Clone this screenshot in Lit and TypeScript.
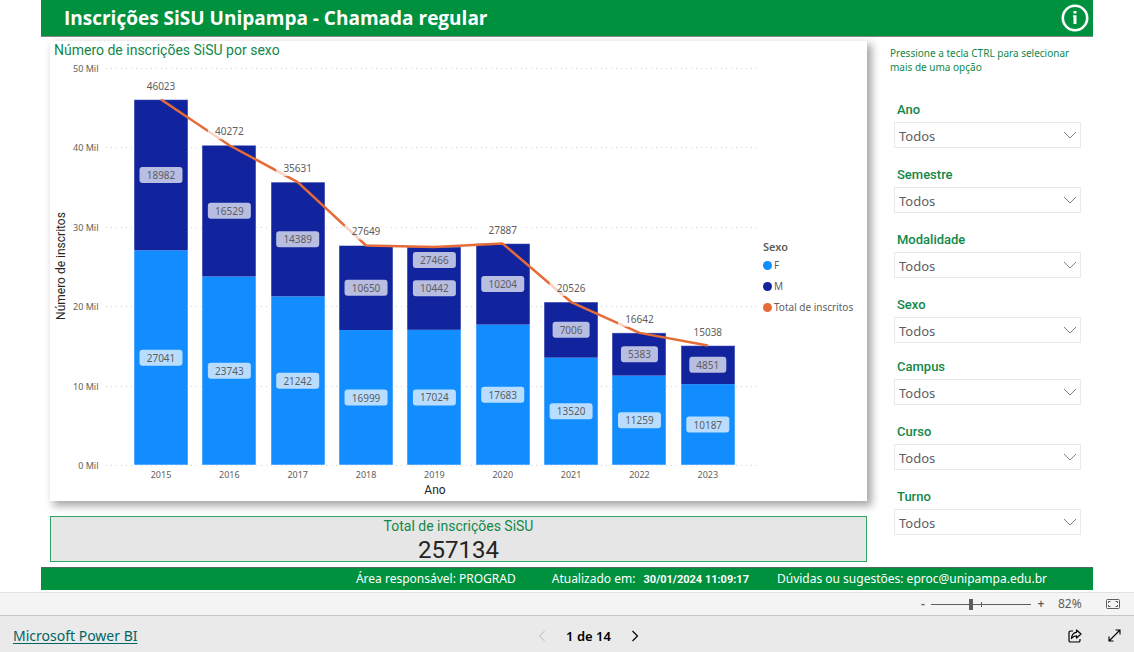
import { LitElement, html, svg, css } from "lit";
import { customElement, property } from "lit/decorators.js";

interface YearRow {
  year: number;
  f: number;
  m: number;
  total: number;
}

const ROWS: YearRow[] = [
  { year: 2015, f: 27041, m: 18982, total: 46023 },
  { year: 2016, f: 23743, m: 16529, total: 40272 },
  { year: 2017, f: 21242, m: 14389, total: 35631 },
  { year: 2018, f: 16999, m: 10650, total: 27649 },
  { year: 2019, f: 17024, m: 10442, total: 27466 },
  { year: 2020, f: 17683, m: 10204, total: 27887 },
  { year: 2021, f: 13520, m: 7006, total: 20526 },
  { year: 2022, f: 11259, m: 5383, total: 16642 },
  { year: 2023, f: 10187, m: 4851, total: 15038 },
];

const BASE = 406;
const TOP = 9;
const MAX = 50000;
const FIRST = 111;
const STEP = 68.35;
const BAR = 54;

const yOf = (v: number) => BASE - (v / MAX) * (BASE - TOP);
const xOf = (i: number) => FIRST + i * STEP;

@customElement("stacked-chart")
export class StackedChart extends LitElement {
  @property({ attribute: false }) rows: YearRow[] = [];

  static styles = css`
    :host { display: flex; min-width: 0; }
    .plot { flex: 1; min-width: 0; display: block; height: auto; }
    text { font-family: "Noto Sans", "Open Sans", sans-serif; fill: #605e5c; }
    .tick { font-size: 9px; }
    .value { font-size: 10px; text-anchor: middle; }
    .middle { text-anchor: middle; }
    .end { text-anchor: end; }
    .axis-title { font-family: Roboto, sans-serif; font-size: 12px; fill: #252423; text-anchor: middle; }
    .grid { stroke: #d0d0d0; stroke-width: 1; stroke-dasharray: 1 4; }
    .f { fill: #118dff; }
    .m { fill: #12239e; }
    .edge { fill: none; stroke: #ffffff; stroke-opacity: 0.5; }
    .line { fill: none; stroke: #e66c37; stroke-width: 2.5; stroke-linejoin: round; }
    .plate { fill: #ffffff; fill-opacity: 0.7; }
    .legend {
      width: 104px;
      padding-top: 180px;
      font: 11px/16px "Noto Sans", "Open Sans", sans-serif;
      color: #605e5c;
    }
    .legend-title { margin: 0; font-size: 11px; line-height: 16px; font-weight: 600; }
    ul { margin: 2px 0 0; padding: 0; list-style: none; display: grid; gap: 5px; }
    li { display: flex; align-items: center; gap: 2px; font-size: 10px; white-space: nowrap; }
    .dot { width: 9px; height: 9px; border-radius: 50%; }
    .dot-f { background: #118dff; }
    .dot-m { background: #12239e; }
    .dot-total { background: #e66c37; }
  `;

  private plate(x: number, y: number, value: number) {
    const w = String(value).length > 4 ? 43 : 37;
    return svg`
      <rect class="plate" x=${x - w / 2} y=${y - 8} width=${w} height="16" rx="3"></rect>
      <text class="value" x=${x} y=${y + 4}>${value}</text>`;
  }

  render() {
    const points = this.rows.map((r, i) => `${xOf(i)},${yOf(r.total)}`).join(" ");
    return html`
      <svg class="plot" viewBox="0 0 713 442" role="img" aria-label="Número de inscrições SiSU por sexo">
        ${[0, 10, 20, 30, 40, 50].map(
          (k) => svg`
            <line class="grid" x1="56" x2="711" y1=${Math.round(yOf(k * 1000)) + 0.5} y2=${Math.round(yOf(k * 1000)) + 0.5}></line>
            <text class="tick end" x="48.5" y=${yOf(k * 1000) + 4}>${k} Mil</text>`
        )}
        ${this.rows.map((r, i) => {
          const x = Math.round(xOf(i) - BAR / 2);
          return svg`
            <rect class="f" x=${x} y=${yOf(r.f)} width=${BAR} height=${BASE - yOf(r.f)}></rect>
            <rect class="m" x=${x} y=${yOf(r.total)} width=${BAR} height=${yOf(r.f) - yOf(r.total)}></rect>
            <rect class="edge" x=${x} y=${yOf(r.total)} width=${BAR} height=${BASE - yOf(r.total)}></rect>
            <text class="tick middle" x=${xOf(i)} y="419">${r.year}</text>`;
        })}
        <polyline class="line" points=${points}></polyline>
        ${this.rows.map((r, i) => {
          const x = xOf(i);
          const top = yOf(r.total);
          return svg`
            ${this.plate(x, (top + yOf(r.f)) / 2, r.m)}
            ${this.plate(x, (yOf(r.f) + BASE) / 2, r.f)}
            ${this.plate(x, r.year === 2019 ? top + 13 : top - 14, r.total)}`;
        })}
        <text class="axis-title" x="385" y="435">Ano</text>
        <text class="axis-title" transform="translate(15 207) rotate(-90)">Número de inscritos</text>
      </svg>
      <div class="legend">
        <h3 class="legend-title">Sexo</h3>
        <ul>
          <li><span class="dot dot-f"></span>F</li>
          <li><span class="dot dot-m"></span>M</li>
          <li><span class="dot dot-total"></span>Total de inscritos</li>
        </ul>
      </div>
    `;
  }
}

@customElement("filter-select")
export class FilterSelect extends LitElement {
  @property() label = "";

  static styles = css`
    :host { display: block; }
    label { display: block; padding-left: 3px; font: 500 13px/16px Roboto, sans-serif; color: #118848; }
    .field { display: grid; margin-top: 4px; }
    select, svg { grid-area: 1 / 1; }
    select {
      appearance: none;
      width: 100%;
      height: 26px;
      margin: 0;
      padding: 1px 28px 0 4px;
      border: 1px solid #eaeaea;
      border-radius: 0;
      background: #ffffff;
      color: #605e5c;
      font: 13px "Noto Sans", "Open Sans", sans-serif;
    }
    svg {
      justify-self: end;
      align-self: center;
      margin-right: 4px;
      width: 14px;
      height: 8px;
      fill: none;
      stroke: #808080;
      pointer-events: none;
    }
  `;

  render() {
    return html`
      <label for="choice">${this.label}</label>
      <div class="field">
        <select id="choice"><option>Todos</option></select>
        <svg viewBox="0 0 14 8" aria-hidden="true"><path d="M1 1l6 6 6-6"></path></svg>
      </div>
    `;
  }
}

@customElement("app-root")
export class AppRoot extends LitElement {
  static styles = css`
    :host {
      display: flex;
      flex-direction: column;
      min-height: 100vh;
      background: #ffffff;
      font-family: "Noto Sans", "Open Sans", sans-serif;
    }
    .report { flex: 1; display: flex; flex-direction: column; padding: 0 41px; }
    .top {
      display: flex;
      align-items: center;
      justify-content: space-between;
      height: 36px;
      padding: 0 4px 0 23px;
      background: #00913f;
      border-bottom: 1px solid #7f8a83;
      color: #ffffff;
    }
    .top h1 { margin: 0; font: 700 19px/24px "Open Sans", "Noto Sans", sans-serif; }
    button { padding: 0; border: 0; background: none; color: inherit; font: inherit; display: grid; place-items: center; cursor: pointer; }
    .body { display: grid; grid-template-columns: minmax(0, 1fr) 191px; gap: 23px; padding: 4px 12px 0 9px; }
    .left { display: flex; flex-direction: column; gap: 15px; }
    .card { background: #ffffff; box-shadow: 4px 4px 8px 1px rgba(0, 0, 0, 0.34); }
    h2 { margin: 0; font: 400 14px/18px Roboto, sans-serif; color: #118848; }
    .card h2 { padding-left: 4px; }
    .total { height: 44px; border: 1px solid #2fa564; background: #e6e6e6; text-align: center; }
    .total p { margin: 0; font: 24px/30px Roboto, sans-serif; color: #252423; }
    .hint { margin: 5px 0 0; font-size: 10px; line-height: 14px; color: #118848; }
    .filters { display: grid; gap: 19px; padding: 0 0 0 4px; }
    .first { margin-top: 28px; }
    .second { margin-top: 16px; }
    .bottom {
      display: flex;
      align-items: center;
      justify-content: flex-end;
      height: 22px;
      margin: 5px 0 2px;
      padding-right: 46px;
      border-top: 1px solid #4f6b59;
      background: #00913f;
      color: #ffffff;
      font-size: 12px;
      line-height: 16px;
      white-space: nowrap;
    }
    .updated { margin: 0 28px 0 36px; }
    .stamp { margin-left: 5px; font: 700 11px/16px Roboto, sans-serif; }
    .zoom {
      display: flex;
      align-items: center;
      justify-content: flex-end;
      height: 22px;
      padding-right: 14px;
      border-top: 1px solid #e1e1e1;
      border-bottom: 1px solid #c8c8c8;
      background: #f4f4f4;
      color: #605e5c;
      font-size: 12px;
      line-height: 16px;
    }
    .zoom button { width: 10px; font-weight: 600; }
    .zoom input { appearance: none; width: 100px; height: 12px; margin: 0 5px 0 3px; background: linear-gradient(#605e5c, #605e5c) 50px 50% / 1px 5px no-repeat, linear-gradient(#605e5c, #605e5c) 0 50% / 100% 1px no-repeat; }
    .zoom input::-webkit-slider-thumb { appearance: none; width: 4px; height: 11px; background: #605e5c; }
    .percent { width: 36px; margin-left: 12px; }
    .zoom .fit { width: 14px; margin-left: 12px; }
    .nav {
      display: grid;
      grid-template-columns: 1fr auto 1fr;
      align-items: center;
      height: 33px;
      padding: 3px 13px 0;
      background: #eaeaea;
      color: #000000;
    }
    a { justify-self: start; color: #006664; font-size: 14px; line-height: 20px; text-underline-offset: 2px; }
    .pager { display: flex; align-items: center; gap: 20px; margin-left: 43px; font-size: 13px; line-height: 18px; font-weight: 600; }
    .pager .off { color: #b8b8b8; }
    .tools { display: flex; justify-content: flex-end; gap: 26px; }
    svg { display: block; fill: none; stroke: currentColor; }
    .solid { fill: currentColor; stroke: none; }
  `;

  render() {
    return html`
      <main class="report">
        <header class="top">
          <h1>Inscrições SiSU Unipampa - Chamada regular</h1>
          <button aria-label="Informações">
            <svg width="28" height="28" viewBox="0 0 28 28">
              <circle cx="14" cy="14" r="12.2" stroke-width="2.6"></circle>
              <path class="solid" d="M12.500 7h3v2.500h-3zM12 11.200h3.500V20H12.500V13H12z"></path>
            </svg>
          </button>
        </header>
        <div class="body">
          <div class="left">
            <section class="card">
              <h2>Número de inscrições SiSU por sexo</h2>
              <stacked-chart .rows=${ROWS}></stacked-chart>
            </section>
            <section class="total">
              <h2>Total de inscrições SiSU</h2>
              <p>257134</p>
            </section>
          </div>
          <aside>
            <p class="hint">Pressione a tecla CTRL para selecionar mais de uma opção</p>
            <div class="filters first">
              ${["Ano", "Semestre", "Modalidade", "Sexo"].map((l) => html`<filter-select label=${l}></filter-select>`)}
            </div>
            <div class="filters second">
              ${["Campus", "Curso", "Turno"].map((l) => html`<filter-select label=${l}></filter-select>`)}
            </div>
          </aside>
        </div>
        <footer class="bottom">
          <span>Área responsável: PROGRAD</span>
          <span class="updated">Atualizado em: <time class="stamp">30/01/2024 11:09:17</time></span>
          <span>Dúvidas ou sugestões: eproc@unipampa.edu.br</span>
        </footer>
      </main>
      <div class="zoom">
        <button aria-label="Reduzir">-</button>
        <input type="range" min="10" max="190" value="82" aria-label="Zoom" />
        <button aria-label="Ampliar">+</button>
        <span class="percent">82%</span>
        <button class="fit" aria-label="Ajustar à página">
          <svg width="14" height="10" viewBox="0 0 14 10">
            <rect x="0.5" y="0.5" width="13" height="9" rx="1"></rect>
            <path d="M2.5 4V2.5H4.5M9.5 2.5h2V4M11.5 6v1.5h-2M4.5 7.5h-2V6"></path>
          </svg>
        </button>
      </div>
      <nav class="nav">
        <a href="#">Microsoft Power BI</a>
        <div class="pager">
          <button class="off" aria-label="Página anterior">
            <svg width="8" height="12" viewBox="0 0 8 12"><path d="M6.5 1l-5 5 5 5"></path></svg>
          </button>
          <span>1 de 14</span>
          <button aria-label="Próxima página">
            <svg width="8" height="12" viewBox="0 0 8 12" stroke-width="1.2"><path d="M1.5 1l5 5-5 5"></path></svg>
          </button>
        </div>
        <div class="tools">
          <button aria-label="Compartilhar">
            <svg width="14" height="14" viewBox="0 0 14 14" stroke-linejoin="round" stroke-width="1.2">
              <path d="M5 2H2.600A1.600 1.600 0 0 0 1 3.600v7.800A1.600 1.600 0 0 0 2.600 13h7.800a1.600 1.600 0 0 0 1.600-1.600V10"></path>
              <path d="M8.500 1l4.500 4-4.500 4V6.800C6.500 6.800 5 7.600 3.500 9.500 3.800 6 5.500 3.600 8.500 3.300z"></path>
            </svg>
          </button>
          <button aria-label="Tela cheia">
            <svg width="13" height="13" viewBox="0 0 13 13"><path d="M1 12L12 1M7.500 1H12v4.500M1 7.500V12h4.500" stroke-width="1.100"></path></svg>
          </button>
        </div>
      </nav>
    `;
  }
}
